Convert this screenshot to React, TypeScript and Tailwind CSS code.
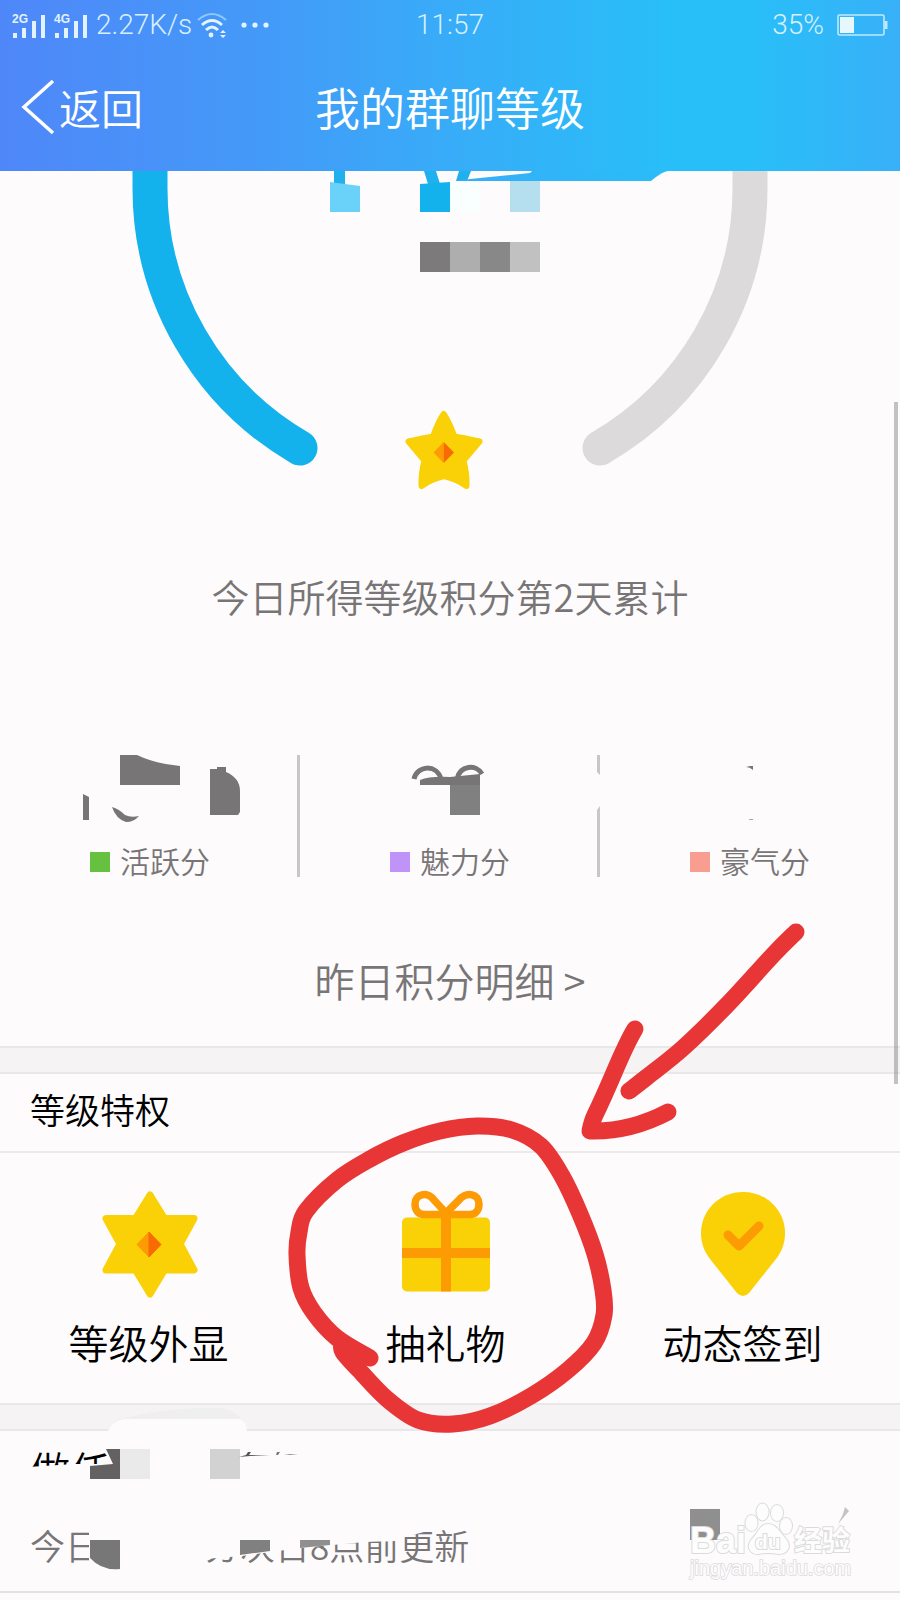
import type { ReactNode } from "react";

type Point = [number, number];

const PAGE = "#fdfbfc";
const MARKER = "#e83636";

/** Turns a list of points into a smooth freehand line. */
function freehand(points: Point[]): string {
  let d = `M${points[0][0]} ${points[0][1]}`;
  for (let i = 0; i < points.length - 1; i++) {
    const p0 = points[Math.max(i - 1, 0)];
    const p1 = points[i];
    const p2 = points[i + 1];
    const p3 = points[Math.min(i + 2, points.length - 1)];
    const c1 = [p1[0] + (p2[0] - p0[0]) / 6, p1[1] + (p2[1] - p0[1]) / 6];
    const c2 = [p2[0] - (p3[0] - p1[0]) / 6, p2[1] - (p3[1] - p1[1]) / 6];
    d += ` C${c1[0]} ${c1[1]} ${c2[0]} ${c2[1]} ${p2[0]} ${p2[1]}`;
  }
  return d;
}

const circleLine = freehand([
  [370, 1358], [337, 1338], [314, 1313], [301, 1288], [297, 1255], [299, 1232],
  [306, 1211], [337, 1180], [370, 1159], [403, 1143], [440, 1131], [477, 1126],
  [512, 1130], [541, 1146], [562, 1176], [580, 1214], [595, 1254], [603, 1290],
  [604, 1315], [594, 1343], [568, 1370], [531, 1396], [490, 1416], [453, 1424],
  [418, 1420], [387, 1399], [359, 1370], [343, 1352], [342, 1344],
]);
const arrowShaft = freehand([
  [796, 932], [773, 955], [727, 1005], [683, 1048], [647, 1077], [629, 1091],
]);
const arrowHead =
  "M635 1029 C622 1050 613 1078 595 1115 Q592 1121 590 1131 Q630 1132 668 1112";

function Signal({ label }: { label: string }) {
  return (
    <svg viewBox="0 0 34 28" className="h-7 w-[34px]" fill="#e3f3fe">
      <text x="0" y="12" fontSize="12" fontWeight="700" fontFamily="Liberation Sans, sans-serif">
        {label}
      </text>
      <rect x="1" y="22" width="4" height="5" />
      <rect x="10" y="17" width="4" height="10" />
      <rect x="20" y="10" width="4" height="17" />
      <rect x="29" y="4" width="4" height="23" />
    </svg>
  );
}

function StatusBar() {
  return (
    <div className="grid h-[46px] grid-cols-[1fr_auto_1fr] items-center px-3 pt-1 font-[Roboto,sans-serif] text-[28px] leading-8 font-light text-[#d6f0fe]">
      <div className="flex items-center">
        <Signal label="2G" />
        <span className="w-2" />
        <Signal label="4G" />
        <span className="ml-2">2.27K/s</span>
        <svg viewBox="0 0 32 26" className="ml-1 h-[26px] w-8" fill="none" strokeWidth="3">
          <path d="M2 8 Q16 -4 30 8" stroke="#8cc8fb" strokeWidth="2" />
          <path d="M6 13 Q16 4 26 13" stroke="#e3f3fe" />
          <path d="M10 18 Q16 12 22 18" stroke="#e3f3fe" />
          <circle cx="15" cy="23" r="2.4" fill="#e3f3fe" />
          <path d="M24 21 l3 -3 3 3z M24 23 h6 l-3 3z" fill="#e3f3fe" />
        </svg>
        <svg viewBox="0 0 30 8" className="ml-3 h-2 w-[30px]" fill="#e3f3fe">
          <circle cx="4" cy="4" r="2.6" />
          <circle cx="15" cy="4" r="2.6" />
          <circle cx="26" cy="4" r="2.6" />
        </svg>
      </div>
      <span>11:57</span>
      <div className="flex items-center justify-end gap-3">
        <span>35%</span>
        <svg viewBox="0 0 52 22" className="h-[22px] w-[52px]">
          <rect x="2" y="1" width="46" height="20" rx="1.5" fill="none" stroke="#bfeafd" strokeWidth="1.6" />
          <rect x="4" y="3" width="14" height="16" fill="#e6f7fe" />
          <rect x="48.5" y="7" width="3" height="8" fill="#bfeafd" />
        </svg>
      </div>
    </div>
  );
}

function NavBar() {
  return (
    <nav className="grid h-[125px] grid-cols-[1fr_auto_1fr] items-center pb-1 text-white">
      <button type="button" className="flex items-center gap-1 pl-[21px] text-[42px] leading-[60px]">
        <svg viewBox="0 0 34 56" className="h-14 w-[34px]" fill="none" stroke="#fff" strokeWidth="3.5">
          <path d="M32 2 L3 28 L32 54" />
        </svg>
        返回
      </button>
      <h1 className="text-[45px] leading-[60px]">我的群聊等级</h1>
      <span />
    </nav>
  );
}

function Gauge() {
  return (
    <svg viewBox="0 171 900 390" className="block w-full">
      <defs>
        <linearGradient id="bar" gradientUnits="userSpaceOnUse" x1="450" y1="0" x2="700" y2="0">
          <stop offset="0" stopColor="#37adf8" />
          <stop offset="1" stopColor="#28bff8" />
        </linearGradient>
      </defs>
      <g fill="none" strokeWidth="35" strokeLinecap="round">
        <path d="M150 150 V188 A300 300 0 0 0 300 448" stroke="#14b2ed" />
        <path d="M750 150 V188 A300 300 0 0 1 600 448" stroke="#dcdadb" />
      </g>
      <path d="M334 171h11v14h-11z M424 171h12l4 13h-12z M459 171h12l-4 10h-11z" fill="#1fb0ee" />
      <path d="M455 181 L470 179 L530 173 L532 171 H668 Q663 171 651 181Z" fill="url(#bar)" />
      <path d="M330 182 L360 186 V212 H330Z" fill="#6ad2f8" />
      <path d="M420 184 L450 182 V212 H420Z" fill="#14b2ed" />
      <path d="M450 182h30v30h-30z" fill="#f9feff" />
      <path d="M510 181h30v31h-30z" fill="#b5deee" />
      <path d="M420 242h30v30h-30z" fill="#7d7a7b" />
      <path d="M450 242h30v30h-30z" fill="#aeaeae" />
      <path d="M480 242h30v30h-30z" fill="#888888" />
      <path d="M510 242h30v30h-30z" fill="#c1c1c1" />
      <path
        d="M443.7 414 Q448 420 454.500 436.500 Q464 438 479.500 441.500 Q474 448 463.500 460.500 Q467 474 466.500 486 Q457 479 444 476 Q431 479 421.500 486 Q421 474 424.500 460.500 Q414 448 408.500 441.500 Q424 438 433 436.500 Q439 420 443.700 414Z"
        fill="#fad007"
        stroke="#fad007"
        strokeWidth="6"
        strokeLinejoin="round"
      />
      <path d="M443.7 442 V463 L433.5 452.5Z" fill="#fd9b05" />
      <path d="M443.7 442 V463 L454 452.5Z" fill="#f96a04" />
    </svg>
  );
}

function Stat({ label, color, children }: { label: string; color: string; children: ReactNode }) {
  return (
    <div className="flex flex-col items-center">
      <svg viewBox="0 0 300 88" className="w-full overflow-visible" fill="#787576">
        {children}
      </svg>
      <div className="flex items-center gap-[10px] text-[30px] leading-[34px]">
        <span className={`mt-1 size-5 ${color}`} />
        {label}
      </div>
    </div>
  );
}

function Stats() {
  return (
    <div className="grid grid-cols-3">
      <Stat label="活跃分" color="bg-[#66c140]">
        <path d="M120 0 H137 Q156 9 180 11 V30 H120Z" />
        <path d="M210 14 H217 V12 H226 V17 Q240 23 240 36 V57 L238 60 H210Z" />
        <path d="M83 39 L89 42 V65 H83Z" />
        <path d="M112 52 Q119 54 125 60 Q131 63 139 61 Q134 67 126 67 Q116 64 112 52Z" />
        <path d="M297 0h3v122h-3z" fill="#c8c7c8" />
      </Stat>
      <Stat label="魅力分" color="bg-[#c093f9]">
        <g fill="none" stroke="#787576" strokeWidth="5">
          <path d="M114 24 C117 10 137 9 141 24" />
          <path d="M157 24 C160 10 176 9 182 19" />
        </g>
        <path d="M120 25 Q130 21 150 22 L180 19 V30 H120Z" />
        <path d="M150 30h30v30h-30z" fill="#808080" />
        <path d="M297 0 H300 V20 L297 17Z M297 55 L300 51 V122 H297Z" fill="#c8c7c8" />
      </Stat>
      <Stat label="豪气分" color="bg-[#f79e90]">
        <path d="M146 12 L150 11 L153 11 V15 Q150 12 146 12Z" />
        <path d="M149 64h4v1h-4z" fill="#aaa" />
      </Stat>
    </div>
  );
}

function Divider() {
  return <div className="h-7 border-y-2 border-[#e9e7e8] bg-[#f5f3f4]" />;
}

function Perk({ label, children }: { label: string; children: ReactNode }) {
  return (
    <button type="button" className="flex flex-col items-center gap-[11px] text-[40px] leading-[60px] text-black">
      <svg viewBox="0 0 110 112" className="h-28 w-[110px]">
        {children}
      </svg>
      {label}
    </button>
  );
}

function Perks() {
  return (
    <div className="grid grid-cols-3 pt-9 pr-[9px] pb-[31px]">
      <Perk label="等级外显">
        <path
          d="M56 6 L70.5 29.5 H100 L86 55 L100 81 H70.5 L56 105 L41.5 81 H12 L26 55 L12 29.5 H41.5Z"
          fill="#fad007"
          stroke="#fad007"
          strokeWidth="7"
          strokeLinejoin="round"
        />
        <path d="M55 43 V68 L43 55.5Z" fill="#fd9b05" stroke="#fd9b05" strokeLinejoin="round" />
        <path d="M55 43 V68 L67 55.5Z" fill="#f96a04" stroke="#f96a04" strokeLinejoin="round" />
      </Perk>
      <Perk label="抽礼物">
        <rect x="11" y="28.5" width="88" height="74" rx="5" fill="#fad007" />
        <path d="M50 27h10v75.5h-10z M11 59h88v10h-88z" fill="#fd9b05" />
        <path
          d="M55 24 L43 11 C36 2 24 5 24 15 C24 22 28 25.5 33 25.5 H79 C84 25.5 88 22 88 15 C88 5 76 2 68 11 L55 24Z"
          fill="none"
          stroke="#fd9b05"
          strokeWidth="7.5"
          strokeLinejoin="round"
        />
      </Perk>
      <Perk label="动态签到">
        <path
          d="M55 3 C31 3 13 22 13 44 C13 54 16 62 22 70 L49 104 Q55 110 61 104 L88 70 C94 62 97 54 97 44 C97 22 79 3 55 3Z"
          fill="#fad007"
        />
        <path
          d="M40 46 L51 57 L71 37"
          fill="none"
          stroke="#fd9b05"
          strokeWidth="9"
          strokeLinecap="round"
          strokeLinejoin="round"
        />
      </Perk>
    </div>
  );
}

function Tasks() {
  return (
    <section className="border-b-2 border-[#e3e1e2] px-[30px] pt-[18px] pb-[21px]">
      <h2 className="text-[40px] leading-[40px] text-black">做任</h2>
      <p className="flex pt-[31px] text-[35px] leading-[50px]">
        <span>今日</span>
        <span className="w-[105px]" />
        <span>分次日8点前更新</span>
      </p>
    </section>
  );
}

function Smudges() {
  return (
    <g>
      <path d="M118 1420 Q150 1410 195 1408 L220 1408 Q236 1410 241 1420Z" fill="#f0efef" />
      <path d="M107 1433 Q112 1421 124 1419 H240 Q247 1422 247 1433Z" fill={PAGE} />
      <path d="M28 1467 L74 1464 L112 1464 V1496 H28Z" fill={PAGE} />
      <path d="M106 1449 H120 V1479 H90 V1466 L113 1464Z" fill="#636162" />
      <path d="M120 1449h30v30h-30z" fill="#eaeaea" />
      <path d="M210 1449h30v30h-30z" fill="#d2d2d2" />
      <path d="M239 1457 L246 1455 L248 1452 L251 1452 L249 1455 L270 1456 L250 1456Z" fill="#555" />
      <path d="M277 1452 L280 1452 L278 1455 L276 1455Z M284 1454 L298 1454.5 L290 1455Z" fill="#777" />
      <path
        d="M89 1520 H436 L424 1532 L405 1537 L396 1541 L365 1542 L300 1548 L242 1556 L205 1559 L200 1570 H89Z"
        fill={PAGE}
      />
      <path d="M90 1540 H120 V1569 Q102 1571 90 1558Z" fill="#787777" />
      <path d="M240 1540 H270 V1551 L240 1555Z" fill="#808080" />
      <path d="M300 1540 H330 V1545 L300 1548Z" fill="#8f8f8f" />
      <path d="M690 1509h30v31h-30z" fill="#8f8f8f" />
      <path d="M845 1507 L849 1511 L838 1524 L843 1514Z" fill="#c4c4c4" />
      <path d="M592 776 H596 V802 L592 806Z" fill={PAGE} />
    </g>
  );
}

function Watermark() {
  return (
    <g
      fill="#fefdfe"
      stroke="#dcdbdc"
      strokeWidth="2"
      paintOrder="stroke"
      fontFamily="Liberation Sans, Noto Sans CJK SC, sans-serif"
    >
      <g fontWeight="700">
        <text x="690" y="1553" fontSize="36">Bai</text>
        <ellipse cx="751.5" cy="1523" rx="6" ry="8" />
        <ellipse cx="762.5" cy="1512" rx="6" ry="8.5" />
        <ellipse cx="777" cy="1513" rx="6" ry="8" />
        <ellipse cx="786" cy="1526" rx="6" ry="8" />
        <path d="M768 1524 C760 1524 758 1533 751 1540 C746 1547 750 1554 758 1554 Q768 1552 779 1554 C788 1554 792 1546 786 1539 C779 1531 776 1524 768 1524Z" />
        <text x="755" y="1549" fontSize="21">du</text>
        <text x="794" y="1551" fontSize="28">经验</text>
      </g>
      <text x="690" y="1575" fontSize="20" strokeWidth="1.6">jingyan.baidu.com</text>
    </g>
  );
}

export default function App() {
  return (
    <div className="relative min-h-screen bg-[#fdfbfc] font-['Noto_Sans_CJK_SC',sans-serif] font-[350] text-[#787576]">
      <header className="bg-[linear-gradient(90deg,#4f87f9_0%,#4499f8_28%,#38acf8_50%,#28bff8_75%,#28bff8_83%,#38b0f8_100%)]">
        <StatusBar />
        <NavBar />
      </header>
      <main>
        <section className="flex flex-col pb-9">
          <Gauge />
          <p className="pt-[10px] pb-[134px] text-center text-[38px] leading-[50px]">今日所得等级积分第2天累计</p>
          <Stats />
          <a href="#detail" className="mt-[73px] self-center text-[40px] leading-[60px]">
            昨日积分明细 &gt;
          </a>
        </section>
        <Divider />
        <section>
          <h2 className="border-b-2 border-[#ebe9ea] px-[30px] pt-[10px] pb-[17px] text-[35px] leading-[50px] text-black">
            等级特权
          </h2>
          <Perks />
        </section>
        <Divider />
        <Tasks />
      </main>
      <span className="absolute top-[402px] right-[2px] h-[682px] w-1 bg-[#8a8889]/50" />
      <svg viewBox="0 0 900 1600" className="pointer-events-none absolute inset-x-0 top-0 w-full">
        <Smudges />
        <Watermark />
        <g fill="none" stroke={MARKER} strokeWidth="17" strokeLinecap="round" strokeLinejoin="round">
          <path d={circleLine} />
          <path d={arrowShaft} />
          <path d={arrowHead} />
        </g>
      </svg>
    </div>
  );
}
